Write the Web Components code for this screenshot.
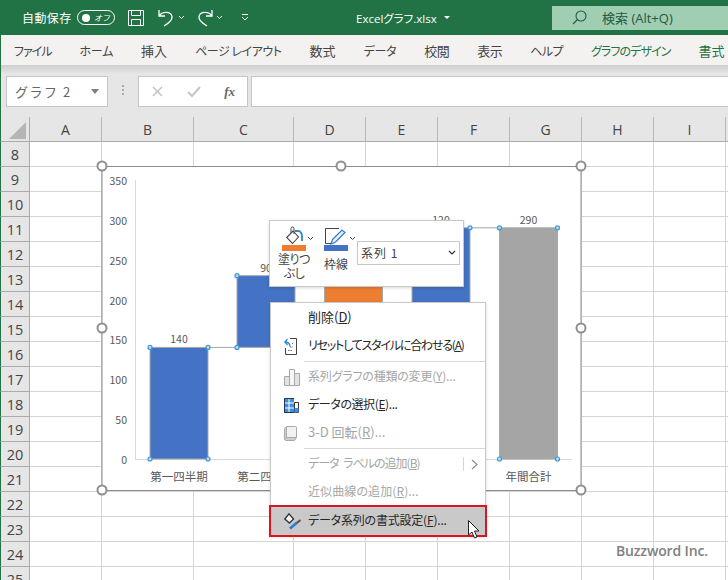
<!DOCTYPE html>
<html lang="ja">
<head>
<meta charset="utf-8">
<title>Excel</title>
<style>
  html, body { margin: 0; padding: 0; background: #fff; }
  body { width: 728px; height: 580px; overflow: hidden; font-family: "Noto Sans CJK JP", "Open Sans", sans-serif; }
</style>
</head>
<body>
<xl-app>
  <xl-titlebar></xl-titlebar>
  <xl-tabs>
    <xl-tab style="letter-spacing:-1px">ファイル</xl-tab><xl-tab style="letter-spacing:-.3px">ホーム</xl-tab><xl-tab wide>挿入</xl-tab><xl-tab style="letter-spacing:-.45px">ページ レイアウト</xl-tab><xl-tab wide>数式</xl-tab><xl-tab style="letter-spacing:-.3px">データ</xl-tab><xl-tab wide style="letter-spacing:-.5px">校閲</xl-tab><xl-tab wide style="letter-spacing:-.5px">表示</xl-tab><xl-tab style="letter-spacing:-.6px">ヘルプ</xl-tab><xl-tab context style="letter-spacing:-.9px">グラフのデザイン</xl-tab><xl-tab context wide>書式</xl-tab>
  </xl-tabs>
  <xl-formula-bar></xl-formula-bar>
  <xl-sheet>
    <xl-chart></xl-chart>
    <xl-mini-toolbar></xl-mini-toolbar>
    <xl-context-menu>
      <xl-menu-item icon="none" style="font-size:13px">削除(<u>D</u>)</xl-menu-item>
      <xl-menu-item icon="reset" style="letter-spacing:-1.2px">リセットしてスタイルに合わせる(<u>A</u>)</xl-menu-item>
      <xl-menu-sep></xl-menu-sep>
      <xl-menu-item icon="bars" disabled style="letter-spacing:-.2px">系列グラフの種類の変更(<u>Y</u>)...</xl-menu-item>
      <xl-menu-item icon="table" style="letter-spacing:-.4px">データの選択(<u>E</u>)...</xl-menu-item>
      <xl-menu-item icon="cube" disabled style="font-size:13px">3-D 回転(<u>R</u>)...</xl-menu-item>
      <xl-menu-sep></xl-menu-sep>
      <xl-menu-item icon="none" disabled submenu style="letter-spacing:-1px;word-spacing:3px">データ ラベルの追加(<u>B</u>)</xl-menu-item>
      <xl-menu-item icon="none" disabled style="letter-spacing:.1px">近似曲線の追加(<u>R</u>)...</xl-menu-item>
      <xl-menu-item icon="paint" selected style="letter-spacing:-.2px">データ系列の書式設定(<u>F</u>)...</xl-menu-item>
    </xl-context-menu>
    <xl-pointer></xl-pointer>
    <xl-watermark>Buzzword Inc.</xl-watermark>
  </xl-sheet>
</xl-app>

<script>
// small helper so every element gets the same open shadow root setup
class Base extends HTMLElement {
  constructor () {
    super()
    this._shadowRoot = this.attachShadow({ mode: 'open' })
    this._shadowRoot.innerHTML = this.markup()
  }
  markup () { return '' }
}

class XlApp extends Base {
  markup () {
    return `<style>
      :host { display: flex; flex-direction: column; width: 728px; height: 580px; overflow: hidden; background: #217346; }
    </style><slot></slot>`
  }
}

class XlTitlebar extends Base {
  markup () {
    return `<style>
      :host { display: flex; align-items: center; height: 35px; background: #217346; color: #fff;
              font-size: 12px; box-sizing: border-box; padding-left: 22px; position: relative; }
      svg { display: block; flex: none; }
      .label { width: 48px; white-space: nowrap; font-feature-settings: "palt"; letter-spacing: .4px; }
      .toggle { width: 38px; height: 15px; margin-left: 7px; box-sizing: border-box; border: 1px solid #fff; border-radius: 8px;
                display: flex; align-items: center; padding-left: 4px; gap: 4px; font-size: 8px; font-style: italic; }
      .toggle i { width: 8px; height: 8px; border-radius: 50%; background: #fff; }
      .quick { display: flex; align-items: center; margin-left: 13px; }
      .file { margin-left: 107px; white-space: nowrap; font-feature-settings: "palt"; font-family: "Open Sans", "Noto Sans CJK JP", sans-serif; font-size: 11.5px; width: 82px; }
      .search { margin-left: auto; width: 176px; height: 24px; background: #9fceb3; color: #24593f; display: flex; align-items: center;
                font-family: "Open Sans", "Noto Sans CJK JP", sans-serif; font-size: 13px; box-sizing: border-box; padding-left: 20px; gap: 15px; }
    </style>
    <span class="label">自動保存</span>
    <span class="toggle"><i></i><span>オフ</span></span>
    <span class="quick">
      <svg width="16" height="16" viewBox="0 0 16 16" fill="none" stroke="#fff" stroke-width="1"><path d="M.5.5h15v15H.5zM3.5.5v5h9v-5M3.5 15.5v-6h9v6"/></svg>
      <svg style="margin-left:13px" width="17" height="18" viewBox="0 0 17 18" fill="none" stroke="#fff" stroke-width="1.3"><path d="M2 1v6h6M2 7C5 2 14 2 15 7.500 15.500 11 12 14 7 17"/></svg>
      <svg style="margin-left:4px" width="7" height="5" viewBox="0 0 7 5" fill="none" stroke="#fff"><path d="M1 1l2.500 2.500L6 1"/></svg>
      <svg style="margin-left:12px" width="17" height="18" viewBox="0 0 17 18" fill="none" stroke="#fff" stroke-width="1.3"><path d="M15 1v6H9M15 7C12 2 3 2 2 7.500 1.500 11 5 14 10 17"/></svg>
      <svg style="margin-left:2px" width="7" height="5" viewBox="0 0 7 5" fill="none" stroke="#fff"><path d="M1 1l2.500 2.500L6 1"/></svg>
      <svg style="margin-left:18px" width="8" height="7" viewBox="0 0 8 7" fill="none" stroke="#fff"><path d="M1 .5h6M1 3l3 3 3-3"/></svg>
    </span>
    <span class="file">Excelグラフ.xlsx</span>
    <svg style="margin-left:6px" width="6" height="3" viewBox="0 0 6 3"><path d="M0 0h6L3 3z" fill="#fff"/></svg>
    <span class="search">
      <svg width="15" height="15" viewBox="0 0 15 15" fill="none" stroke="#24593f" stroke-width="1.1"><circle cx="9" cy="6" r="5"/><path d="M5.500 9.500L1 14"/></svg>
      <span>検索 (Alt+Q)</span>
    </span>`
  }
}

class XlTabs extends Base {
  markup () {
    return `<style>
      :host { display: flex; align-items: center; gap: 28px; height: 30px; background: #f3f2f1; padding-left: 13px; box-sizing: border-box;
              white-space: nowrap; margin-left: 1px; }
    </style><slot></slot>`
  }
}

class XlTab extends Base {
  markup () {
    return `<style>
      :host { display: block; font-size: 12px; color: #444; font-feature-settings: "palt"; flex: none; }
      :host([wide]) { font-size: 13px; }
      :host([context]) { color: #217346; }
    </style><slot></slot>`
  }
}

class XlFormulaBar extends Base {
  markup () {
    return `<style>
      :host { display: flex; align-items: flex-start; height: 52px; box-sizing: border-box; padding: 11px 0 0 5px; margin-left: 1px;
              background: linear-gradient(#cfcfcf, #e6e6e6 9px); }
      .box { height: 31px; box-sizing: border-box; background: #fff; border: 1px solid #c6c6c6; display: flex; align-items: center; }
      .name { width: 102px; padding-left: 8px; font-size: 13px; color: #666; letter-spacing: 1.500px; position: relative; }
      .name svg { position: absolute; right: 7px; top: 12px; }
      .dots { width: 30px; display: flex; flex-direction: column; align-items: center; gap: 2px; padding-top: 9px; }
      .dots i { width: 2px; height: 2px; background: #aaa; }
      .fx { width: 110px; justify-content: space-between; padding: 0 12px 0 12px; }
      .fx b { font: italic bold 13px "Liberation Serif", serif; color: #666; }
      .input { flex: 1; margin-left: 3px; border-right: 0; }
    </style>
    <div class="box name">グラフ 2<svg width="10" height="5" viewBox="0 0 10 5"><path d="M1 0h8L5 5z" fill="#808080"/></svg></div>
    <div class="dots"><i></i><i></i><i></i></div>
    <div class="box fx">
      <svg width="13" height="13" viewBox="0 0 13 13" fill="none" stroke="#c4c4c4" stroke-width="1.500"><path d="M2 2l9 9M11 2l-9 9"/></svg>
      <svg width="14" height="13" viewBox="0 0 14 13" fill="none" stroke="#c4c4c4" stroke-width="2"><path d="M1 7l4 4 8-9"/></svg>
      <b>fx</b>
    </div>
    <div class="box input"></div>`
  }
}

class XlSheet extends Base {
  markup () {
    const widths = [72, 92, 100, 72, 72, 72, 72, 72, 72, 20]
    const letters = ['A', 'B', 'C', 'D', 'E', 'F', 'G', 'H', 'I', '']
    let cells = '<div class="corner"><svg width="17" height="17" viewBox="0 0 17 17"><path d="M17 0v17H0z" fill="#b5b5b5"/></svg></div>'
    letters.forEach(l => { cells += `<div class="ch">${l}</div>` })
    for (let r = 8; r <= 25; r++) {
      cells += `<div class="rh">${r}</div>`
      letters.forEach(() => { cells += '<div class="c"></div>' })
    }
    return `<style>
      :host { display: block; position: relative; height: 463px; overflow: hidden; background: #fff; }
      .grid { display: grid; grid-template-columns: 30px ${widths.map(w => w + 'px').join(' ')};
              grid-template-rows: 25px repeat(18, 25px); font: 14px "Open Sans", sans-serif; color: #444; }
      .corner { background: #e6e6e6; border-right: 1px solid #ababab; border-bottom: 1px solid #ababab; border-left: 1px solid #217346; box-sizing: border-box; padding: 5px 0 0 8px; }
      .corner svg { display: block; }
      .ch { background: #e6e6e6; border-bottom: 1px solid #ababab; border-right: 1px solid #b8b8b8; box-sizing: border-box; display: flex; align-items: center; justify-content: center; }
      .rh { background: #e6e6e6; border-right: 1px solid #ababab; border-bottom: 1px solid #ababab; border-left: 1px solid #217346; box-sizing: border-box;
            display: flex; align-items: center; justify-content: center; font-size: 14.500px; }
      .c { border-right: 1px solid #d4d4d4; border-bottom: 1px solid #d4d4d4; box-sizing: border-box; }
    </style>
    <div class="grid">${cells}</div>
    <slot></slot>`
  }
}

class XlChart extends Base {
  markup () {
    const k = 279 / 350
    const y = v => 459 - v * k
    const ticks = [0, 50, 100, 150, 200, 250, 300, 350]
    const bars = [
      [150, y(140), y(0), '#4472c4'],
      [237, y(230), y(140), '#4472c4'],
      [324.500, y(230), y(170), '#ed7d31'],
      [412, y(290), y(170), '#4472c4'],
      [499.500, y(290), y(0), '#a5a5a5']
    ]
    const rect = b => `<rect x="${b[0]}" y="${b[1]}" width="58" height="${b[2] - b[1]}" fill="${b[3]}" stroke="#a9a9a9"/>`
    const pts = [[150, y(140)], [208, y(140)], [150, 459], [208, 459], [237, y(230)], [237, y(140)], [412, y(290)], [470, y(290)], [499.500, y(290)], [557.500, y(290)], [499.500, 459], [557.500, 459]]
    const knobs = [[102, 166], [341, 166], [581, 166], [102, 328], [581, 328], [102, 490], [341, 490], [581, 490]]
    return `<style>
      :host { position: absolute; left: 92px; top: 39px; width: 500px; height: 345px; }
      svg { display: block; }
      text { font-family: "Noto Sans CJK JP", "Open Sans", sans-serif; font-size: 10.500px; fill: #595959; }
      text.cat { font-size: 11.500px; }
    </style>
    <svg width="500" height="345" viewBox="92 156 500 345">
      <rect x="102" y="166.500" width="479" height="324" fill="#fff" stroke="#8c8c8c"/>
      <path d="M135.500 180V459.500M135 459.500H572" stroke="#d9d9d9" fill="none"/>
      <path d="M208 ${y(140)}H237M295 ${y(230)}H324M470 ${y(290)}H499" stroke="#a5a5a5" fill="none"/>
      ${ticks.map(t => `<text x="127" y="${y(t) + 5}" text-anchor="end">${t}</text>`).join('')}
      ${bars.map(rect).join('')}
      <text x="179" y="${y(140) - 4}" text-anchor="middle">140</text>
      <text x="266" y="${y(230) - 4}" text-anchor="middle">90</text>
      <text x="441" y="${y(290) - 4}" text-anchor="middle">120</text>
      <text x="528.500" y="${y(290) - 4}" text-anchor="middle">290</text>
      <text class="cat" x="179" y="481" text-anchor="middle">第一四半期</text>
      <text class="cat" x="266" y="481" text-anchor="middle">第二四半期</text>
      <text class="cat" x="528.500" y="481" text-anchor="middle">年間合計</text>
      ${pts.map(p => `<circle cx="${p[0]}" cy="${p[1]}" r="2" fill="#bfe0f7" stroke="#3c97d8" stroke-width="1.200"/>`).join('')}
      ${knobs.map(p => `<circle cx="${p[0]}" cy="${p[1]}" r="4.500" fill="#fff" stroke="#8f8f8f" stroke-width="2"/>`).join('')}
    </svg>`
  }
}

class XlMiniToolbar extends Base {
  markup () {
    const caret = '<svg class="caret" width="7" height="5" viewBox="0 0 7 5" fill="none" stroke="#444"><path d="M1 1l2.500 2.500L6 1"/></svg>'
    return `<style>
      :host { position: absolute; left: 269px; top: 103px; width: 195px; height: 67px; box-sizing: border-box; background: #fff;
              border: 1px solid #c8c8c8; box-shadow: 0 1px 3px rgba(0,0,0,.15); display: flex; font-size: 12px; color: #444; }
      .btn { position: relative; width: 42px; display: flex; flex-direction: column; align-items: center; line-height: 14px; text-align: center; flex: none;
             font-feature-settings: "palt"; }
      .fill { margin-left: 3px; }
      .ico { height: 24px; width: 42px; position: relative; }
      .ico svg { position: absolute; }
      .caret { position: absolute; left: 34px; top: 15px; }
      .bar { width: 24px; height: 6px; }
      .lbl { letter-spacing: -.5px; padding-top: 1px; }
      .sel { width: 103px; height: 24px; box-sizing: border-box; border: 1px solid #c8c8c8; margin: 20px 0 0 0; flex: none;
             display: flex; align-items: center; justify-content: space-between; padding: 0 3px 2px 3px; }
      .sel span { letter-spacing: 1px; }
      .t2 { margin-top: 6px; }
    </style>
    <div class="btn fill">
      <div class="ico">
        <svg style="left:13px;top:5px" width="18" height="19" viewBox="0 0 18 19" fill="none"><path d="M.7 11.500L7 5l5.500 6-6 6.500z" stroke="#444" stroke-width="1.100"/><path d="M5 7V2.500a1.500 1.500 0 0 1 3 0V8" stroke="#444"/><path d="M9 5h3.500c2 0 3.500 3 3.500 5v5" stroke="#2e8bc9" stroke-width="1.800"/></svg>
        ${caret}
      </div>
      <div class="bar" style="background:#ed7d31"></div>
      <div class="lbl">塗りつ<br>ぶし</div>
    </div>
    <div class="btn line">
      <div class="ico">
        <svg style="left:10px;top:7px" width="22" height="17" viewBox="0 0 22 17" fill="none"><path d="M6 15.500H.5V.5H14" stroke="#444"/><path d="M7.500 11.500L17 2l3 2.500-9.500 9.500-4.500 2z" fill="#e8f1fa" stroke="#2b7cd3" stroke-width="1.200"/></svg>
        ${caret}
      </div>
      <div class="bar" style="background:#4472c4"></div>
      <div class="t2">枠線</div>
    </div>
    <div class="sel"><span>系列 1</span><svg width="8" height="5" viewBox="0 0 8 5" fill="none" stroke="#333" stroke-width="1.200"><path d="M1 1l3 3 3-3"/></svg></div>`
  }
}

class XlContextMenu extends Base {
  markup () {
    return `<style>
      :host { position: absolute; left: 270px; top: 185px; width: 216px; height: 234px; box-sizing: border-box; background: #fff;
              border: 1px solid #c8c8c8; border-bottom: 0; box-shadow: 0 1px 3px rgba(0,0,0,.15); padding-top: 1px;
              display: flex; flex-direction: column; }
    </style><slot></slot>`
  }
}

const MENU_ICONS = {
  none: '',
  reset: '<svg width="13" height="17" viewBox="0 0 13 17" fill="none"><path d="M6 .5h6.500v16h-11V10" stroke="#444"/><path d="M6 9h3M4 12.500h5M8 5.500h1" stroke="#666" stroke-dasharray="1.500 1"/><path d="M6 8.500C6 5 4 4 .8 4M3.500 1L.8 4l2.700 3" stroke="#2e8bc9" stroke-width="1.300"/></svg>',
  bars: '<svg width="16" height="17" viewBox="0 0 16 17" fill="#e2e2e2" stroke="#a8a8a8"><path d="M.5 7.500h5v9h-5z"/><path d="M5.500.5h5v16h-5z" fill="#f6f6f6"/><path d="M10.500 4.500h5v12h-5z"/></svg>',
  table: '<svg width="15" height="15" viewBox="0 0 15 15"><path d="M0 0h10v15H0z" fill="#3f8fdc"/><path d="M0 5h10M0 10h10M5 0v15" stroke="#fff"/><path d="M.5.500h9.500M.5.500v14h9.500" fill="none" stroke="#20364f"/><path d="M10.500 4.500h4v10h-4z" fill="#fff" stroke="#333"/><path d="M10.500 10h4v4.500h-4z" fill="#3f8fdc"/></svg>',
  cube: '<svg width="13" height="15" viewBox="0 0 13 15"><path d="M2.500.500h9a1 1 0 0 1 1 1v10h-10z" fill="#f2f2f2" stroke="#ababab"/><path d="M.5 2.500l2-2v11l-2 2z" fill="#cfcfcf" stroke="#ababab"/><path d="M.5 13.500l1 1h9l2-3h-10z" fill="#cfcfcf" stroke="#ababab"/></svg>',
  paint: '<svg width="17" height="17" viewBox="0 0 17 17" fill="none"><path d="M.8 6L5 .8 9.500 6 5.500 10z" fill="#f4f4f4" stroke="#333" stroke-width="1.300"/><path d="M16.500 7L12 10.500" stroke="#555" stroke-width="2"/><path d="M12.500 10L6 15.500" stroke="#2b7cd3" stroke-width="2.800"/></svg>'
}

class XlMenuItem extends Base {
  markup () {
    return `<style>
      :host { display: flex; align-items: center; height: 28px; font-size: 12px; color: #262626; white-space: nowrap; flex: none;
              font-feature-settings: "palt"; position: relative; }
      :host([disabled]) { color: #a6a6a6; }
      :host([selected]) { background: #c9c9c9; outline: 2px solid #dc1420; outline-offset: 0; margin: 1px 0 0 0; }
      .i { width: 37px; display: flex; box-sizing: border-box; padding-left: 13px; flex: none; }
      .t { padding-bottom: 3px; }
      svg { display: block; }
      .sub { position: absolute; left: 192px; top: 7px; height: 14px; width: 20px; border-left: 1px solid #d4d4d4; display: flex; align-items: center; justify-content: center; }
    </style>
    <span class="i">${MENU_ICONS[this.getAttribute('icon')] || ''}</span><span class="t"><slot></slot></span>
    ${this.hasAttribute('submenu') ? '<span class="sub"><svg width="7" height="11" viewBox="0 0 7 11" fill="none" stroke="#8c8c8c" stroke-width="1.200"><path d="M1 1l5 4.500L1 10"/></svg></span>' : ''}`
  }
}

class XlMenuSep extends Base {
  markup () {
    return `<style>
      :host { display: block; height: 3px; flex: none; position: relative; margin-left: 33px; }
      i { display: block; height: 1px; background: #d8d8d8; margin-top: 1px; }
    </style><i></i>`
  }
}

class XlPointer extends Base {
  markup () {
    return `<style>
      :host { position: absolute; left: 468px; top: 403px; width: 13px; height: 20px; }
      svg { display: block; }
    </style>
    <svg width="13" height="20" viewBox="0 0 13 20"><path d="M.5.500V15l3.500-3 2.500 6 2.500-1-2.500-6H11z" fill="#fff" stroke="#222"/></svg>`
  }
}

class XlWatermark extends Base {
  markup () {
    return `<style>
      :host { position: absolute; left: 616px; top: 424px; font: 600 14px "Open Sans", sans-serif; color: #808080; white-space: nowrap; letter-spacing: -.15px; }
    </style><slot></slot>`
  }
}

customElements.define('xl-app', XlApp)
customElements.define('xl-titlebar', XlTitlebar)
customElements.define('xl-tabs', XlTabs)
customElements.define('xl-tab', XlTab)
customElements.define('xl-formula-bar', XlFormulaBar)
customElements.define('xl-sheet', XlSheet)
customElements.define('xl-chart', XlChart)
customElements.define('xl-mini-toolbar', XlMiniToolbar)
customElements.define('xl-context-menu', XlContextMenu)
customElements.define('xl-menu-item', XlMenuItem)
customElements.define('xl-menu-sep', XlMenuSep)
customElements.define('xl-pointer', XlPointer)
customElements.define('xl-watermark', XlWatermark)
</script>
</body>
</html>
